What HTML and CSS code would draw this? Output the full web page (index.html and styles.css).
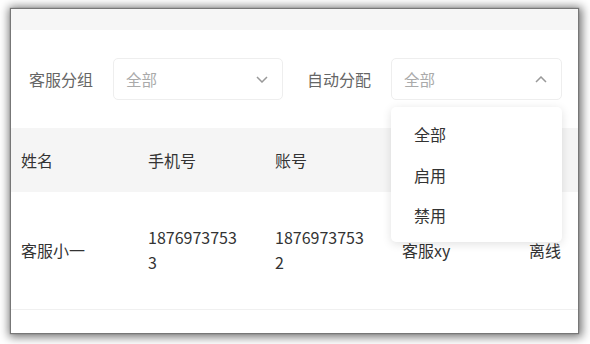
FILE: index.html
```html
<!DOCTYPE html>
<html lang="zh-CN">
<head>
    <meta charset="UTF-8">
    <meta name="viewport" content="width=device-width, initial-scale=1.0">
    <title>客服列表</title>
    <link rel="stylesheet" href="styles.css">
</head>
<body>
    <div class="window">
        <div class="top-band"></div>

        <div class="filters">
            <label class="filter-label">客服分组</label>
            <div class="select">
                <span class="select-value">全部</span>
                <svg class="arrow" width="12" height="7" viewBox="0 0 12 7">
                    <path d="M1 1 L6 6 L11 1" fill="none" stroke="#999" stroke-width="1.5"/>
                </svg>
            </div>

            <label class="filter-label">自动分配</label>
            <div class="select open">
                <span class="select-value">全部</span>
                <svg class="arrow" width="12" height="7" viewBox="0 0 12 7">
                    <path d="M1 6 L6 1 L11 6" fill="none" stroke="#999" stroke-width="1.5"/>
                </svg>
                <ul class="dropdown">
                    <li>全部</li>
                    <li>启用</li>
                    <li>禁用</li>
                </ul>
            </div>
        </div>

        <table class="table">
            <thead>
                <tr>
                    <th>姓名</th>
                    <th>手机号</th>
                    <th>账号</th>
                    <th></th>
                    <th></th>
                </tr>
            </thead>
            <tbody>
                <tr>
                    <td>客服小一</td>
                    <td>18769737533</td>
                    <td>18769737532</td>
                    <td>客服xy</td>
                    <td>离线</td>
                </tr>
            </tbody>
        </table>
    </div>
</body>
</html>
```

FILE: styles.css
```css
html, body {
    margin: 0;
    background-color: #ffffff;
}
body {
    padding: 9px 12px 11px 11px;
    font-family: "Noto Sans CJK SC", "Noto Sans", sans-serif;
}
.window {
    height: 324px;
    background-color: white;
    overflow: hidden;
    box-shadow: 0 0 1px 1px #777, 1px 1px 9px 3px rgba(0,0,0,0.55);
}
.top-band {
    height: 21px;
    background-color: #f6f6f6;
}
.filters {
    display: flex;
    align-items: center;
    padding: 28px 0 28px 18px;
}
.filter-label {
    font-size: 16px;
    color: #666;
    margin-right: 20px;
}
.select {
    position: relative;
    box-sizing: border-box;
    width: 170px;
    height: 42px;
    margin-right: 24px;
    padding: 0 14px 0 12px;
    border: 1px solid #eeeeee;
    border-radius: 5px;
    display: flex;
    align-items: center;
    justify-content: space-between;
}
.select.open {
    width: 171px;
    margin-right: 0;
}
.select-value {
    font-size: 15.5px;
    color: #aaa;
}
.dropdown {
    position: absolute;
    top: 48px;
    left: -1px;
    width: 171px;
    box-sizing: border-box;
    margin: 0;
    padding: 7px 0 6px;
    list-style: none;
    background-color: white;
    border-radius: 5px;
    box-shadow: 0 2px 10px rgba(0,0,0,0.12);
    z-index: 2;
}
.dropdown li {
    height: 40.5px;
    line-height: 40.5px;
    padding-left: 23px;
    font-size: 16px;
    color: #333;
}
.table {
    border-collapse: collapse;
    table-layout: fixed;
    width: 635px;
    font-size: 16px;
    color: #333;
}
.table th, .table td {
    width: 127px;
    box-sizing: border-box;
    padding: 0 25px 0 10px;
    text-align: left;
    word-break: break-all;
}
.table th {
    height: 64px;
    font-weight: normal;
    background-color: #f5f5f5;
}
.table td {
    height: 117px;
    line-height: 25px;
    border-bottom: 1px solid #f0f0f0;
}
```
